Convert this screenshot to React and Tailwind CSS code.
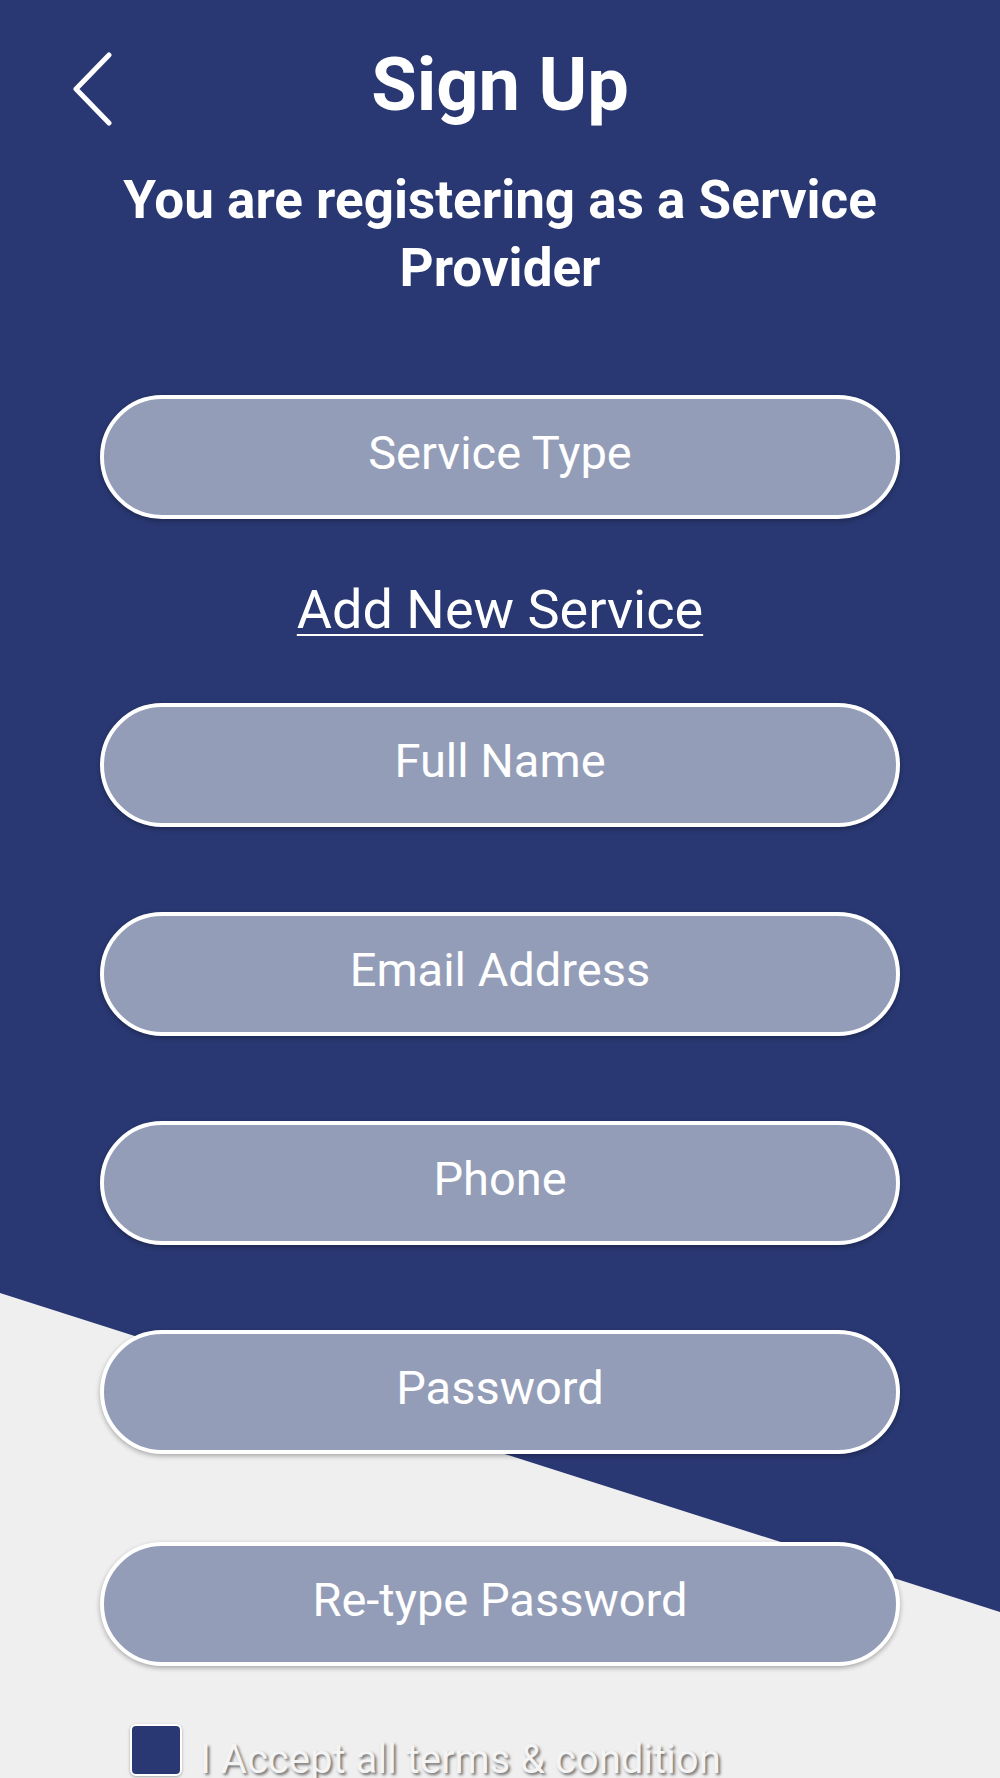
export default function App() {
  const fields = ["Full Name", "Email Address", "Phone", "Password"];

  return (
    <div className="relative w-full h-[1778px] overflow-hidden bg-[#efefef] font-['Roboto',sans-serif]">
      {/* navy backdrop, cut diagonally near the bottom */}
      <svg className="absolute inset-0" width="1000" height="1778" viewBox="0 0 1000 1778">
        <polygon points="0,0 1000,0 1000,1612 0,1293" fill="#293872" />
      </svg>

      <div className="relative flex flex-col">
        {/* header */}
        <div className="grid grid-cols-[1fr_auto_1fr] items-start pt-[48px]">
          <button className="ml-[72px] mt-[4px] w-[42px] h-[76px] flex items-center">
            <svg width="42" height="76" viewBox="0 0 42 76">
              <polyline points="37,3 4,37 37,71" fill="none" stroke="white" strokeWidth="5" strokeLinecap="round" strokeLinejoin="round" />
            </svg>
          </button>
          <h1 className="text-[74px] leading-none font-bold text-white">Sign Up</h1>
          <div />
        </div>

        <p className="mt-[38px] px-[90px] text-center text-[53px] leading-[68px] font-bold text-white">
          You are registering as a Service Provider
        </p>

        {/* form */}
        <div className="mt-[93px] w-[800px] mx-auto flex flex-col items-center">
          <Field label="Service Type" />
          <a className="mt-[58px] text-[54px] leading-[65px] text-white underline underline-offset-[6px] decoration-[2px]">
            Add New Service
          </a>
          <div className="mt-[61px] w-full flex flex-col gap-[85px]">
            {fields.map((f) => (
              <Field key={f} label={f} />
            ))}
          </div>
          <div className="mt-[88px] w-full">
            <Field label="Re-type Password" />
          </div>
        </div>

        <label className="mt-[58px] ml-[130px] flex items-start gap-[18px]">
          <span className="w-[52px] h-[52px] rounded-[6px] border-2 border-white bg-[#293872] shadow-[0_1px_3px_rgba(0,0,0,0.3)]" />
          <span className="mt-[12px] text-[40px] leading-[48px] text-[#f4f4f4] [text-shadow:2px_2px_3px_rgba(0,0,0,0.55)]">
            I Accept all terms &amp; condition
          </span>
        </label>
      </div>
    </div>
  );
}

function Field({ label }) {
  return (
    <div className="w-full h-[124px] rounded-full border-[4px] border-white bg-[#939db8] shadow-[0_2px_5px_rgba(0,0,0,0.3)] flex items-center justify-center pb-[10px]">
      <span className="text-[47px] leading-none text-white">{label}</span>
    </div>
  );
}
